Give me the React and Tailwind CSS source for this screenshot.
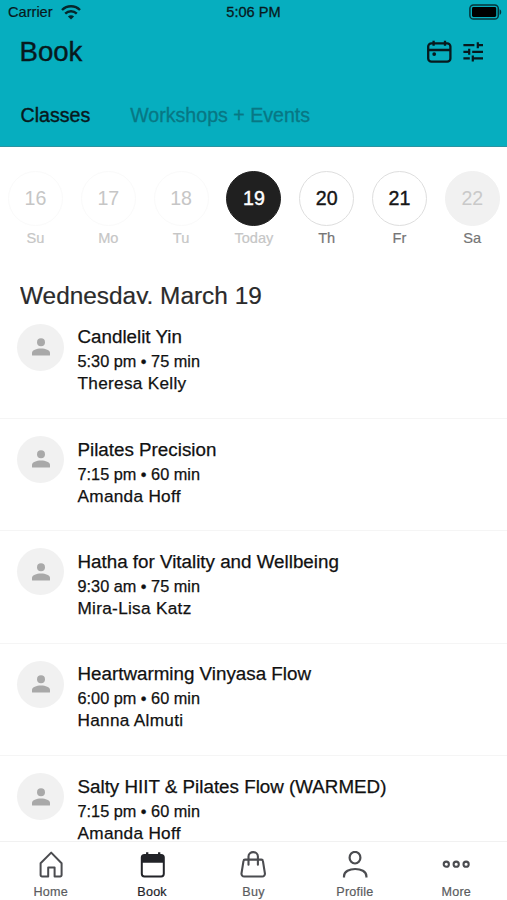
// data
const days = [
    { date: "16", label: "Su", circle: "border-[#fafafa] text-[#c6c6c6]", text: "text-[#c6c6c6]" },
    { date: "17", label: "Mo", circle: "border-[#fafafa] text-[#c6c6c6]", text: "text-[#c6c6c6]" },
    { date: "18", label: "Tu", circle: "border-[#fafafa] text-[#c6c6c6]", text: "text-[#c6c6c6]" },
    { date: "19", label: "Today", circle: "border-[#202020] bg-[#202020] text-white [-webkit-text-stroke:0.4px]", text: "text-[#c6c6c6]" },
    { date: "20", label: "Th", circle: "border-[#dedede] text-[#161616] [-webkit-text-stroke:0.4px]", text: "text-[#757575]" },
    { date: "21", label: "Fr", circle: "border-[#dedede] text-[#161616] [-webkit-text-stroke:0.4px]", text: "text-[#757575]" },
    { date: "22", label: "Sa", circle: "border-[#f1f1f1] bg-[#f1f1f1] text-[#c9c9c9]", text: "text-[#757575]" },
];

const classes = [
    { id: 1, name: "Candlelit Yin", time: "5:30 pm • 75 min", teacher: "Theresa Kelly" },
    { id: 2, name: "Pilates Precision", time: "7:15 pm • 60 min", teacher: "Amanda Hoff" },
    { id: 3, name: "Hatha for Vitality and Wellbeing", time: "9:30 am • 75 min", teacher: "Mira-Lisa Katz" },
    { id: 4, name: "Heartwarming Vinyasa Flow", time: "6:00 pm • 60 min", teacher: "Hanna Almuti" },
    { id: 5, name: "Salty HIIT & Pilates Flow (WARMED)", time: "7:15 pm • 60 min", teacher: "Amanda Hoff" },
];

const tabs = [
    { label: "Home", icon: <HomeIcon /> },
    { label: "Book", icon: <BookIcon />, active: true },
    { label: "Buy", icon: <BagIcon /> },
    { label: "Profile", icon: <ProfileIcon /> },
    { label: "More", icon: <MoreIcon /> },
];

// icons
function WifiIcon() {
    return (
        <svg width="20" height="16" viewBox="0 0 20 16" fill="none" stroke="#06272b" strokeWidth="2.4">
            <path d="M1 6C6 1 14 1 19 6" />
            <path d="M4.2 9.6c3.3-3.2 8.3-3.2 11.6 0" />
            <path d="M10 15.6 6.9 12.4c1.8-1.6 4.4-1.6 6.2 0Z" fill="#06272b" stroke="none" />
        </svg>
    );
}

function BatteryIcon() {
    return (
        <svg width="33" height="16" viewBox="0 0 33 16" fill="none">
            <rect x="0.9" y="0.9" width="28.4" height="14.2" rx="3.6" stroke="#06343a" strokeWidth="1.5" />
            <rect x="3" y="3" width="24.2" height="10" rx="1.4" fill="#000" />
            <path d="M30.6 5.2c2.2.8 2.2 4.8 0 5.6Z" fill="#06343a" />
        </svg>
    );
}

function CalendarIcon() {
    return (
        <svg width="26" height="24" viewBox="0 0 26 24" fill="none" stroke="#08191d" strokeWidth="2.3">
            <rect x="2.2" y="3.4" width="22.2" height="18.2" rx="3.2" />
            <path d="M2.4 10h22M7.6.8v5M19 .8v5" />
            <circle cx="8.2" cy="14.1" r="1.9" fill="#08191d" stroke="none" />
        </svg>
    );
}

function TuneIcon() {
    return (
        <svg width="20" height="20" viewBox="0 0 20 20" fill="none" stroke="#08191d" strokeWidth="2.2">
            <path d="M.4 3.2h11M14 3.2h6M14.8.2v6" />
            <path d="M.4 9.8h6.4M9.2 9.8H20M6.2 6.8v6" />
            <path d="M.4 16.4h6.4M9.8 16.4H20M9.8 13.4v6" />
        </svg>
    );
}

function HomeIcon() {
    return (
        <svg width="24" height="28" viewBox="0 0 24 28" fill="none" stroke="#4b4c50" strokeWidth="2" strokeLinejoin="round">
            <path d="M1.6 12.2 12.2 1.6 22.6 12.2V24a1.4 1.4 0 0 1-1.4 1.4H15.600V16.400H9.200v9H3A1.4 1.4 0 0 1 1.600 24Z" />
        </svg>
    );
}

function BookIcon() {
    return (
        <svg width="26" height="28" viewBox="0 0 26 28" fill="none" stroke="#222328" strokeWidth="2">
            <rect x="2.8" y="4" width="22" height="21.4" rx="2.6" />
            <path d="M2.8 11.7V6.4A2.4 2.4 0 0 1 5.2 4h17.2a2.4 2.4 0 0 1 2.4 2.4v5.3Z" fill="#222328" stroke="none" />
            <path d="M8.2 1.3V5M20.2 1.3V5" strokeWidth="2.3" />
        </svg>
    );
}

function BagIcon() {
    return (
        <svg width="28" height="28" viewBox="0 0 28 28" fill="none" stroke="#4b4c50" strokeWidth="2.1" strokeLinecap="round" strokeLinejoin="round">
            <path d="M6 8.600h16.400a1.500 1.500 0 0 1 1.500 1.300L25.900 22.400a2.700 2.700 0 0 1-2.700 3.100H5.200a2.700 2.700 0 0 1-2.700-3.100L4.500 9.900A1.500 1.500 0 0 1 6 8.600Z" />
            <path d="M9.500 13.800V5.600c0-6 9.400-6 9.400 0v8.200" />
        </svg>
    );
}

function ProfileIcon() {
    return (
        <svg width="26" height="28" viewBox="0 0 26 28" fill="none" stroke="#4b4c50" strokeWidth="2.2">
            <ellipse cx="13" cy="6.7" rx="5.4" ry="5.8" />
            <path d="M2 26.6V25.200c0-9.600 22.400-9.600 22.400 0v1.400" />
        </svg>
    );
}

function MoreIcon() {
    return (
        <svg width="28" height="28" viewBox="0 0 28 28" fill="none" stroke="#4b4c50" strokeWidth="2.1">
            <circle cx="4.3" cy="13.2" r="2.6" />
            <circle cx="14.2" cy="13.2" r="2.6" />
            <circle cx="24.1" cy="13.2" r="2.6" />
        </svg>
    );
}

function Avatar() {
    return (
        <div className="flex h-[47px] w-[47px] shrink-0 items-center justify-center rounded-full bg-[#f1f1f1]">
            <svg width="18" height="18" viewBox="0 0 18 18" fill="#a9a9a9">
                <circle cx="9" cy="4.2" r="4" />
                <path d="M0 17V15C0 9 18 9 18 15v2q0 .6-.6.6H.6Q0 17.600 0 17Z" />
            </svg>
        </div>
    );
}

function Header() {
    return (
        <header className="h-[147px] shrink-0 border-b border-[#2a94a2] bg-[#06aebf] text-[#08191d]">
            {/* status bar */}
            <div className="grid h-6 grid-cols-3 items-center pr-[5px] pl-2">
                <div className="flex items-center gap-2">
                    <span className="text-[14.6px] leading-none [-webkit-text-stroke:0.2px]">Carrier</span>
                    <WifiIcon />
                </div>
                <span className="-ml-[3px] text-center text-[14.6px] leading-none [-webkit-text-stroke:0.3px]">5:06 PM</span>
                <div className="flex justify-end">
                    <BatteryIcon />
                </div>
            </div>
            <div className="flex h-14 items-center justify-between pr-[24px] pl-[19.5px]">
                <h1 className="text-[27.6px] [-webkit-text-stroke:0.4px]">Book</h1>
                <div className="flex items-center gap-[11px]">
                    <CalendarIcon />
                    <TuneIcon />
                </div>
            </div>
            <nav className="flex h-[72px] items-center gap-10 pl-[20.5px] text-[19.6px]">
                <span className="[-webkit-text-stroke:0.4px]">Classes</span>
                <span className="text-[#087784] [-webkit-text-stroke:0.3px]">Workshops + Events</span>
            </nav>
        </header>
    );
}

function DayPicker() {
    return (
        <div className="flex shrink-0 gap-[17.8px] pt-[23.5px] pl-2">
            {days.map((day) => (
                <div key={day.date} className="flex w-[55px] shrink-0 flex-col items-center">
                    <div className={`flex h-[55px] w-[55px] items-center justify-center rounded-full border pt-[2px] text-[19.6px] ${day.circle}`}>
                        {day.date}
                    </div>
                    <span className={`mt-[3px] text-[14.6px] leading-[18px] [-webkit-text-stroke:0.2px] ${day.text}`}>{day.label}</span>
                </div>
            ))}
        </div>
    );
}

export default function App() {
    return (
        <div className="flex h-[900px] w-[507px] flex-col overflow-hidden bg-white font-['Liberation_Sans',sans-serif]">
            <Header />
            <DayPicker />

            <h2 className="mt-[33.5px] mb-[2.5px] ml-5 h-[24px] shrink-0 overflow-hidden text-[24.4px] leading-[31px] text-[#2b2b2b] [-webkit-text-stroke:0.2px]">Wednesday, March 19</h2>
            <main className="min-h-0 flex-1 overflow-hidden">
                {classes.map((item) => (
                    <div key={item.id} className="flex h-[112.4px] gap-[13.5px] border-b border-[#f5f5f5] pt-[17px] pl-[17px] text-[#111] [-webkit-text-stroke:0.25px]">
                        <Avatar />
                        <div className="pt-[0.8px]">
                            <h3 className="text-[18.8px] leading-[26px]">{item.name}</h3>
                            <p className="text-[16.3px] leading-[22px]">{item.time}</p>
                            <p className="text-[17.2px] leading-[23px] tracking-[0.3px]">{item.teacher}</p>
                        </div>
                    </div>
                ))}
            </main>

            <footer className="grid h-[59px] shrink-0 grid-cols-5 border-t border-[#f1f1f1] bg-white pt-[9px]">
                {tabs.map((tab) => (
                    <div key={tab.label} className={`flex flex-col items-center gap-[5px] text-[12.6px] leading-4 tracking-[0.2px] [-webkit-text-stroke:0.2px] ${tab.active ? "text-[#222328]" : "text-[#5b5c60]"}`}>
                        {tab.icon}
                        <span>{tab.label}</span>
                    </div>
                ))}
            </footer>
        </div>
    );
}
